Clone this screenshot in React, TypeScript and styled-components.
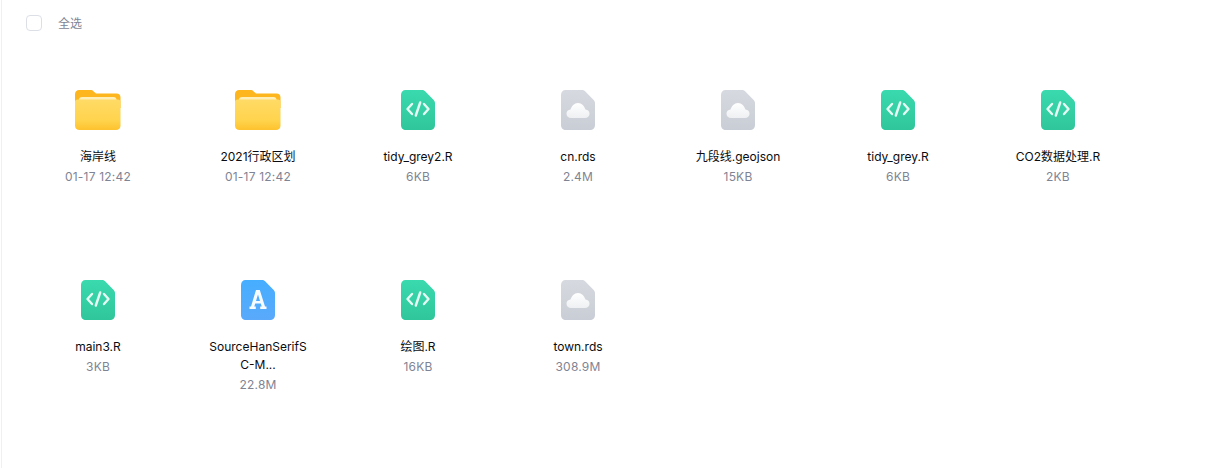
import React from "react";
import styled, { createGlobalStyle } from "styled-components";

const GlobalStyle = createGlobalStyle`
  html, body {
    margin: 0;
    padding: 0;
    background: #fff;
  }
  body {
    font-family: Inter, "Noto Sans CJK SC", sans-serif;
  }
`;

const Page = styled.div`
  width: 1210px;
  height: 468px;
  box-sizing: border-box;
  margin-left: 1px;
  border-left: 1px solid #f0f0f2;
  overflow: hidden;
`;

const SelectBar = styled.div`
  display: flex;
  align-items: flex-start;
  height: 16px;
  padding: 15px 0 0 24px;
`;

const Checkbox = styled.span`
  width: 16px;
  height: 16px;
  box-sizing: border-box;
  border: 1px solid #dcdfe6;
  border-radius: 4px;
  background: #fff;
`;

const SelectLabel = styled.span`
  margin-left: 16px;
  font-size: 12px;
  line-height: 18px;
  color: #7e8494;
`;

const Grid = styled.div`
  display: grid;
  grid-template-columns: repeat(7, 160px);
  grid-auto-rows: 190px;
  padding: 51px 0 0 16px;
`;

const Cell = styled.div`
  display: flex;
  flex-direction: column;
  align-items: center;
  padding-top: 8px;
`;

const IconBox = styled.div`
  width: 48px;
  height: 48px;
  svg {
    display: block;
  }
`;

const Name = styled.div`
  width: 100px;
  margin-top: 10px;
  font-size: 12px;
  line-height: 18px;
  color: #0a0c10;
  text-align: center;
  word-break: break-all;
`;

const WideName = styled(Name)`
  width: 120px;
  word-break: keep-all;
  white-space: nowrap;
`;

const Meta = styled.div`
  margin-top: 1px;
  font-size: 12px;
  line-height: 19px;
  letter-spacing: 0.2px;
  color: #7f8494;
  text-align: center;
`;

const FolderIcon = () => (
  <svg width="48" height="48" viewBox="0 0 48 48">
    <defs>
      <linearGradient id="folderFront" x1="0" y1="0" x2="0" y2="1">
        <stop offset="0" stopColor="#ffdb66" />
        <stop offset="0.7" stopColor="#ffd34c" />
        <stop offset="1" stopColor="#fec22e" />
      </linearGradient>
    </defs>
    <path
      d="M1 4c0-2.200 1.800-4 4-4h11.500c1.300 0 2.300.5 3.200 1.400L22 3.500h20.500c2.500 0 4 1.500 4 4V18H1z"
      fill="#fdb61d"
    />
    <rect x="5" y="7" width="37.500" height="8" rx="3" fill="#ffeeb5" />
    <path
      d="M1 12c0-1.500 1-2.500 2.500-2.500h40.500c1.500 0 2.500 1 2.500 2.500v23.500c0 2.800-1.700 4.500-4.500 4.500h-36.500C2.700 40 1 38.300 1 35.500z"
      fill="url(#folderFront)"
    />
  </svg>
);

const SheetShape = ({ fill }: { fill: string }) => (
  <path
    d="M11.500 0H28c1.200 0 2.300.5 3.100 1.300l8.600 8.600c.8.800 1.300 1.900 1.300 3.100V35c0 3-2 5-5 5H12c-3 0-5-2-5-5V5c0-3 1.800-5 4.500-5z"
    fill={fill}
  />
);

const CodeIcon = () => (
  <svg width="48" height="48" viewBox="0 0 48 48">
    <defs>
      <linearGradient id="codeFill" x1="0" y1="0" x2="0" y2="1">
        <stop offset="0" stopColor="#3ad9ae" />
        <stop offset="1" stopColor="#30c69b" />
      </linearGradient>
    </defs>
    <SheetShape fill="url(#codeFill)" />
    <path
      d="M18 14 13.500 19l4.500 5M30 14l4.500 5-4.500 5M26.200 12.500 21.800 25.500"
      fill="none"
      stroke="#e6fbf4"
      strokeWidth="2.400"
      strokeLinecap="round"
      strokeLinejoin="round"
    />
  </svg>
);

const CloudIcon = () => (
  <svg width="48" height="48" viewBox="0 0 48 48">
    <defs>
      <linearGradient id="sheetFill" x1="0" y1="0" x2="0" y2="1">
        <stop offset="0" stopColor="#d6d9df" />
        <stop offset="1" stopColor="#c9cdd5" />
      </linearGradient>
      <linearGradient id="cloudFill" x1="0" y1="0" x2="0" y2="1">
        <stop offset="0" stopColor="#ffffff" />
        <stop offset="1" stopColor="#eef0f3" />
      </linearGradient>
    </defs>
    <SheetShape fill="url(#sheetFill)" />
    <path
      d="M17 28c-2.600 0-4.500-1.800-4.500-4.200 0-2.300 1.700-4 4-4.200C17.400 16.400 20.400 13 24 13c3.600 0 6.600 3.400 7.500 6.600 2.300.2 4 1.900 4 4.200 0 2.400-1.900 4.200-4.500 4.200z"
      fill="url(#cloudFill)"
    />
  </svg>
);

const FontIcon = () => (
  <svg width="48" height="48" viewBox="0 0 48 48">
    <defs>
      <linearGradient id="fontFill" x1="0" y1="0" x2="0" y2="1">
        <stop offset="0" stopColor="#46aeff" />
        <stop offset="1" stopColor="#5aa9fb" />
      </linearGradient>
    </defs>
    <SheetShape fill="url(#fontFill)" />
    <path
      d="M22 10h3.800l5.200 16.500h1.500V29h-6.300v-2.500h1.500l-.9-3h-5.600l-.9 3h1.500V29h-6.300v-2.500H17zM24 14.500l-2 6.500h4z"
      fill="#f6fbff"
      fillRule="evenodd"
    />
  </svg>
);

type Kind = "folder" | "code" | "cloud" | "font";

const icons: Record<Kind, React.ComponentType> = {
  folder: FolderIcon,
  code: CodeIcon,
  cloud: CloudIcon,
  font: FontIcon,
};

const files: { name: string; meta: string; kind: Kind; wide?: boolean }[] = [
  { name: "海岸线", meta: "01-17 12:42", kind: "folder" },
  { name: "2021行政区划", meta: "01-17 12:42", kind: "folder" },
  { name: "tidy_grey2.R", meta: "6KB", kind: "code" },
  { name: "cn.rds", meta: "2.4M", kind: "cloud" },
  { name: "九段线.geojson", meta: "15KB", kind: "cloud", wide: true },
  { name: "tidy_grey.R", meta: "6KB", kind: "code" },
  { name: "CO2数据处理.R", meta: "2KB", kind: "code", wide: true },
  { name: "main3.R", meta: "3KB", kind: "code" },
  { name: "SourceHanSerifSC-M...", meta: "22.8M", kind: "font" },
  { name: "绘图.R", meta: "16KB", kind: "code" },
  { name: "town.rds", meta: "308.9M", kind: "cloud" },
];

export default function App() {
  return (
    <>
      <GlobalStyle />
      <Page>
        <SelectBar>
          <Checkbox />
          <SelectLabel>全选</SelectLabel>
        </SelectBar>
        <Grid>
          {files.map((file) => {
            const Icon = icons[file.kind];
            const Label = file.wide ? WideName : Name;
            return (
              <Cell key={file.name}>
                <IconBox>
                  <Icon />
                </IconBox>
                <Label>{file.name}</Label>
                <Meta>{file.meta}</Meta>
              </Cell>
            );
          })}
        </Grid>
      </Page>
    </>
  );
}
